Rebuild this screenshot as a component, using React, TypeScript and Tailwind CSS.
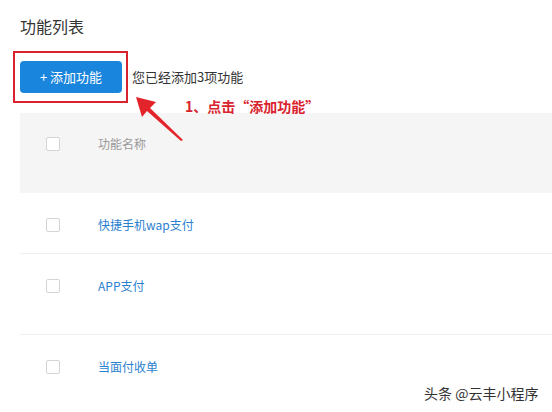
import React from "react";

const font = { fontFamily: '"Noto Sans CJK SC", "Noto Sans", sans-serif' };

function Box() {
  return <div className="w-[14px] h-[14px] border border-[#d4d4d4] rounded-[2px] bg-white shrink-0" />;
}

export default function App() {
  return (
    <div className="relative w-[552px] h-[412px] overflow-hidden bg-white" style={font}>
      <div className="pl-[20px]">
        <div className="pt-[14px] h-[38px] text-[16px] leading-[24px] text-[#333]">功能列表</div>
        <div className="mt-[23px] flex items-center h-[32px]">
          <div className="w-[102px] h-[32px] rounded-[4px] bg-[#1a85dc] text-white text-[13px] flex items-center justify-center">
            + 添加功能
          </div>
          <div className="ml-[10px] text-[13px] text-[#333]">您已经添加3项功能</div>
        </div>
        <div className="mt-[20px]">
          <div className="h-[80px] bg-[#f5f5f5] flex items-start pt-[24px] pl-[26px]">
            <Box />
            <div className="ml-[38px] -mt-[2px] text-[12px] leading-[18px] text-[#999]">功能名称</div>
          </div>
          <div className="h-[61px] border-b border-[#efefef] flex items-start pt-[25px] pl-[26px]">
            <Box />
            <div className="ml-[38px] -mt-[2px] text-[12px] leading-[18px] text-[#2a7fcf]">快捷手机wap支付</div>
          </div>
          <div className="h-[81px] border-b border-[#efefef] flex items-start pt-[25px] pl-[26px]">
            <Box />
            <div className="ml-[38px] -mt-[2px] text-[12px] leading-[18px] text-[#2a7fcf]">APP支付</div>
          </div>
          <div className="h-[80px] flex items-start pt-[25px] pl-[26px]">
            <Box />
            <div className="ml-[38px] -mt-[2px] text-[12px] leading-[18px] text-[#2a7fcf]">当面付收单</div>
          </div>
        </div>
      </div>

      {/* annotation: red box */}
      <div className="absolute left-[13px] top-[51px] w-[115px] h-[52px] border-2 border-[#d8232f]" />
      {/* annotation: arrow */}
      <svg className="absolute left-0 top-0" width="552" height="412" viewBox="0 0 552 412">
        <polygon points="136,97 156,102 150,108 183,140 181,141 147,111 142,117" fill="#e3242b" />
      </svg>
      <div className="absolute left-[185px] top-[96px] text-[14px] leading-[20px] font-bold text-[#d9232e]">
        1、点击“添加功能”
      </div>
      <div
        className="absolute left-[424px] top-[384px] text-[14px] leading-[18px] text-[#333]"
        style={{ textShadow: "0 0 1px #fff" }}
      >
        头条 @云丰小程序
      </div>
    </div>
  );
}
